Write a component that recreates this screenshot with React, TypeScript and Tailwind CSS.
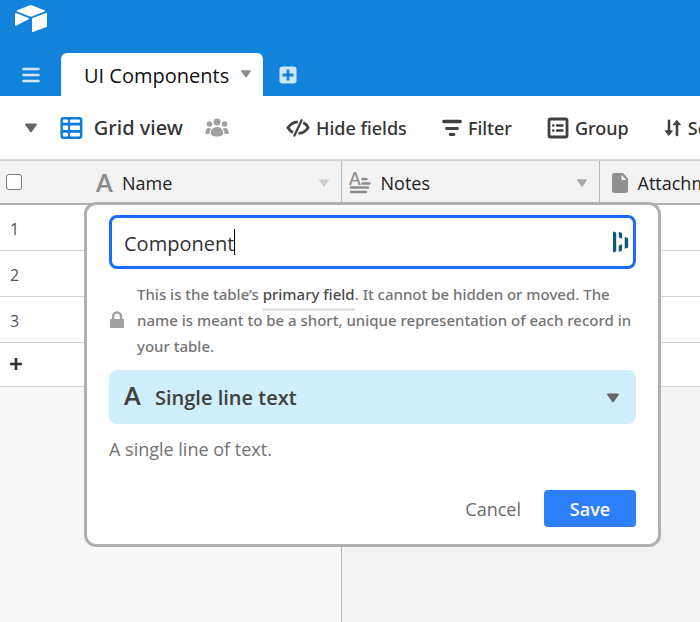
import { useState } from 'react'
import type { ReactNode } from 'react'

const columns = [
  { name: 'Name', icon: <LetterIcon className="text-[#8c8c8c]" />, arrow: 'text-[#cfcfcf]', pad: 'pl-3' },
  { name: 'Notes', icon: <LongTextIcon />, arrow: 'text-[#a8a8a8]', pad: 'pl-1.5' },
  { name: 'Attachments', icon: <FileIcon />, arrow: 'text-[#a8a8a8]', pad: 'pl-3' },
]

const rows = [1, 2, 3]

function Triangle({ className }: { className: string }) {
  return (
    <svg viewBox="0 0 12 9" className={className} fill="currentColor" aria-hidden="true">
      <path d="M1 0h10c.8 0 1.200.8.700 1.400L6.700 8.500c-.3.500-1.100.500-1.400 0L.3 1.400C-.2.800.2 0 1 0Z" />
    </svg>
  )
}

function LetterIcon({ className }: { className: string }) {
  return (
    <span
      aria-hidden="true"
      className={`inline-block w-4 text-center font-['Lato',sans-serif] text-2xl leading-6 font-bold ${className}`}
    >
      A
    </span>
  )
}

function LongTextIcon() {
  return (
    <svg width="23" height="22" viewBox="0 0 23 22" aria-hidden="true" className="shrink-0">
      <text x="1" y="13" fontSize="17" fontWeight="600" fontFamily="Lato, sans-serif" fill="#8c8c8c">
        A
      </text>
      <path
        d="M14.500 7h4M14.500 11.500h7M3 15.500h17M3 20h15"
        stroke="#8c8c8c"
        strokeWidth="2.400"
        strokeLinecap="round"
      />
    </svg>
  )
}

function FileIcon() {
  return (
    <svg width="16" height="20" viewBox="0 0 16 20" aria-hidden="true" className="shrink-0">
      <path
        fill="#8f8f8f"
        fillRule="evenodd"
        d="M2.500 0H11l5 5.500v12a2.500 2.500 0 0 1-2.500 2.500h-11A2.500 2.500 0 0 1 0 17.500v-15A2.500 2.500 0 0 1 2.500 0ZM9.500 1.800V7h5Z"
      />
    </svg>
  )
}

function Logo() {
  return (
    <svg width="34" height="28" viewBox="0 0 34 28" fill="#fff" role="img" aria-label="Airtable">
      <path d="M15.200.5 3.200 5.200c-.8.300-.8 1 0 1.300l12.200 4.800c1 .4 2 .4 3 0l12-4.800c.8-.3.800-1 0-1.300L18.300.5c-1-.4-2.100-.4-3.100 0Z" />
      <path d="M18 13.800v12.600c0 .6.500.9 1 .7l13.400-5.200c.4-.2.600-.4.600-.8V8.600c0-.6-.5-.9-1-.7L18.600 13c-.4.200-.6.400-.6.800Z" />
      <path d="M14.600 14.300 2.200 20.700c-.5.300-1.200 0-1.200-.6V8.700c0-.7.600-1 1.200-.7l12.200 4.900c.6.300.8 1.100.2 1.400Z" />
    </svg>
  )
}

function GridIcon() {
  return (
    <svg width="24" height="24" viewBox="0 0 24 24" aria-hidden="true">
      <rect x="0.500" y="0.500" width="23" height="23" rx="3" fill="#0b7bdc" />
      <g fill="#fff">
        <rect x="3" y="3" width="5.500" height="3.500" rx="1" />
        <rect x="10.500" y="3" width="10.500" height="3.500" rx="1" />
        <rect x="3" y="9.500" width="5.500" height="4.500" rx="1" />
        <rect x="10.500" y="9.500" width="10.500" height="4.500" rx="1" />
        <rect x="3" y="17" width="5.500" height="4" rx="1" />
        <rect x="10.500" y="17" width="10.500" height="4" rx="1" />
      </g>
    </svg>
  )
}

function PeopleIcon() {
  return (
    <svg width="24" height="20" viewBox="0 0 24 20" fill="#a0a0a0" aria-hidden="true">
      <circle cx="12" cy="4" r="3.500" />
      <circle cx="4.500" cy="6" r="2.800" />
      <circle cx="19.500" cy="6" r="2.800" />
      <path d="M12 9c3.600 0 6.200 2.600 6.200 6.200 0 2.200-2.900 3.300-6.200 3.300s-6.200-1.100-6.200-3.300C5.800 11.600 8.400 9 12 9Z" />
      <path d="M3.500 10c1 0 2 .3 2.700.9A8 8 0 0 0 4.200 16H1.500C.7 16 .3 15.500.4 14.700.6 11.900 1.700 10 3.500 10ZM20.500 10c-1 0-2 .3-2.700.9a8 8 0 0 1 2 5.100h2.700c.8 0 1.200-.5 1.100-1.300-.2-2.800-1.300-4.700-3.100-4.700Z" />
    </svg>
  )
}

function HideIcon() {
  return (
    <svg width="24" height="18" viewBox="0 0 24 18" fill="none" stroke="#404040" strokeWidth="2.800" aria-hidden="true">
      <path d="M11.800 2.800C7.500 3 4.200 5.300 1.900 8.800c1.400 2.200 3 3.700 5.100 4.700" />
      <path d="M17.200 3.600c2 1 3.700 2.700 4.900 5.100-2.300 3.500-5.300 5.500-9.600 5.700" />
      <path d="m15.600 1.200-7.200 15.500" strokeWidth="2.200" strokeLinecap="round" />
    </svg>
  )
}

function FilterIcon() {
  return (
    <svg width="20" height="18" viewBox="0 0 20 18" stroke="#404040" strokeLinecap="round" aria-hidden="true">
      <path d="M1.800 2.500h16.400" strokeWidth="3.400" />
      <path d="M4.500 9.500h11M8.200 15.500h3.800" strokeWidth="2.800" />
    </svg>
  )
}

function GroupIcon() {
  return (
    <svg width="22" height="22" viewBox="0 0 22 22" fill="none" stroke="#404040" aria-hidden="true">
      <rect x="2" y="2" width="18" height="18" rx="1.500" strokeWidth="2.800" />
      <path d="M10 8.500h5.500M10 13.500h5.500M6.200 8.500h.2M6.200 13.500h.2" strokeWidth="2.400" strokeLinecap="round" />
    </svg>
  )
}

function SortIcon() {
  return (
    <svg width="18" height="18" viewBox="0 0 18 18" fill="none" stroke="#404040" strokeWidth="2.600" strokeLinecap="round" aria-hidden="true">
      <path d="M5 1.800V13M13 16V5" />
      <path d="M1.600 11.800h6.800L5 16.200ZM9.600 5.700h6.800L13 1.500Z" fill="#404040" strokeWidth="1" strokeLinejoin="round" />
    </svg>
  )
}

function LockIcon() {
  return (
    <svg width="16" height="18" viewBox="0 0 16 18" aria-hidden="true" className="shrink-0">
      <path d="M4 8.500V5.500a4 4 0 0 1 8 0v3" fill="none" stroke="#a0a0a0" strokeWidth="2.400" />
      <rect x="1" y="8" width="14" height="9" rx="1" fill="#a0a0a0" />
    </svg>
  )
}

function PasswordIcon() {
  return (
    <svg
      width="16"
      height="22"
      viewBox="0 0 16 22"
      fill="#0e5c70"
      aria-hidden="true"
      className="absolute top-4 right-[7px]"
    >
      <path d="M0 .5 3.200 1.500v19L0 21.500ZM5.800.7 9 2v5.800L5.800 6.500ZM5.800 14.500 9 13.300v6.200l-3.200 1.400ZM11.700 6l3.500 1.200v9.200l-3.500 1.300Z" />
    </svg>
  )
}

function ToolButton({ icon, children }: { icon: ReactNode; children: ReactNode }) {
  return (
    <button type="button" className="flex shrink-0 items-center gap-1.5 text-lg font-medium text-[#333333]">
      {icon}
      {children}
    </button>
  )
}

function TopBar() {
  return (
    <header className="bg-[#1283da] pt-[5px]">
      <a href="#home" className="ml-3.5 block w-fit">
        <Logo />
      </a>
      <div className="mt-5 flex items-stretch">
        <button type="button" aria-label="Menu" className="flex w-[61px] items-center justify-center">
          <svg width="18" height="16" viewBox="0 0 18 16" stroke="#cfe6fa" strokeWidth="2.600" strokeLinecap="round">
            <path d="M1.500 2h15M1.500 8h15M1.500 14h15" />
          </svg>
        </button>
        <div className="flex h-[43px] w-[202px] items-center justify-between rounded-t-md bg-white pt-0.5 pr-3 pl-[23px]">
          <h1 className="text-xl font-medium whitespace-nowrap text-[#111111]">UI Components</h1>
          <button type="button" aria-label="Table options" className="text-[#8c8c8c]">
            <Triangle className="mb-1 h-2 w-2.5" />
          </button>
        </div>
        <button type="button" aria-label="Add table" className="ml-4">
          <svg width="18" height="18" viewBox="0 0 18 18">
            <rect x="0.500" y="0.500" width="17" height="17" rx="3" fill="#d0e6fa" />
            <path d="M9 3.500v11M3.500 9h11" stroke="#1283da" strokeWidth="2.800" />
          </svg>
        </button>
      </div>
    </header>
  )
}

function Toolbar() {
  return (
    <div className="flex h-[65px] items-center overflow-hidden border-b-2 border-[#d6d6d6] bg-white font-['Noto_Sans',sans-serif] whitespace-nowrap text-[#333333]">
      <button type="button" aria-label="Toggle views" className="ml-[25px] shrink-0 text-[#666666]">
        <Triangle className="h-2.5 w-3" />
      </button>
      <button type="button" className="ml-[23px] flex w-[123px] shrink-0 items-center gap-[11px] text-xl font-medium">
        <GridIcon />
        Grid view
      </button>
      <button type="button" aria-label="Collaborators" className="ml-[22px] shrink-0">
        <PeopleIcon />
      </button>
      <div className="ml-[57px] flex gap-[35px]">
        <ToolButton icon={<HideIcon />}>Hide fields</ToolButton>
        <ToolButton icon={<FilterIcon />}>Filter</ToolButton>
        <ToolButton icon={<GroupIcon />}>Group</ToolButton>
        <ToolButton icon={<SortIcon />}>Sort</ToolButton>
      </div>
    </div>
  )
}

function DataGrid() {
  return (
    <table className="w-full table-fixed border-collapse bg-white">
      <colgroup>
        <col className="w-[84px]" />
        <col className="w-[257px]" />
        <col className="w-[258px]" />
        <col />
      </colgroup>
      <thead>
        <tr className="h-[43px] border-b-2 border-[#b0b0b0] bg-[#f3f3f3]">
          <th className="pl-1.5 text-left">
            <input
              type="checkbox"
              aria-label="Select all rows"
              className="block size-4 appearance-none rounded-[3px] border border-[#6f7d88] bg-white"
            />
          </th>
          {columns.map((column) => (
            <th
              key={column.name}
              className={`overflow-hidden border-r border-[#b8b8b8] pt-0.5 pr-3 font-normal last:border-r-0 ${column.pad}`}
            >
              <div className="flex items-center gap-2.5 text-lg leading-6 text-[#222222]">
                {column.icon}
                <span>{column.name}</span>
                <button type="button" aria-label={`${column.name} options`} className={`ml-auto ${column.arrow}`}>
                  <Triangle className="h-2 w-2.5" />
                </button>
              </div>
            </th>
          ))}
        </tr>
      </thead>
      <tbody className="text-base text-[#555555]">
        {rows.map((row) => (
          <tr key={row} className="h-[46px] border-b border-[#cfd5d9]">
            <td className="pt-1 pl-2.5">{row}</td>
            <td className="border-r border-[#cfd5d9]" />
            <td className="border-r border-[#cfd5d9]" />
            <td />
          </tr>
        ))}
        <tr className="h-[44px] border-b border-[#cfd5d9]">
          <td colSpan={4} className="pl-2.5">
            <button type="button" aria-label="Add record" className="block">
              <svg width="12" height="12" viewBox="0 0 12 12" stroke="#333333" strokeWidth="2.600">
                <path d="M6 0v12M0 6h12" />
              </svg>
            </button>
          </td>
        </tr>
      </tbody>
    </table>
  )
}

function FieldDialog() {
  const [name, setName] = useState('Component')

  return (
    <form
      role="dialog"
      aria-label="Edit field"
      onSubmit={(event) => event.preventDefault()}
      className="absolute top-[41px] left-[84px] w-[577px] rounded-xl border-3 border-[#b0b0b0] bg-white px-[22px] pt-2.5 pb-[17px]"
    >
      <div className="relative">
        <input
          aria-label="Field name"
          value={name}
          onChange={(event) => setName(event.target.value)}
          className="h-[54px] w-full rounded-lg border-3 border-[#1a6dfb] bg-white pt-0.5 pr-9 pl-3 text-xl text-[#333333] caret-transparent outline-none"
        />
        <span aria-hidden="true" className="absolute top-3.5 left-[125px] h-[26px] w-px bg-black" />
        <PasswordIcon />
      </div>

      <div className="mt-3 flex items-center gap-3">
        <LockIcon />
        <p className="font-['Noto_Sans',sans-serif] text-[15px] leading-[26px] font-medium text-[#737373]">
          This is the table’s{' '}
          <span className="text-[#4a4a4a] underline decoration-[#e3e3e3] decoration-3 underline-offset-8 [text-decoration-skip-ink:none]">
            primary field
          </span>
          . It cannot be hidden or moved. The name is meant to be a short, unique representation of each record in your
          table.
        </p>
      </div>

      <div className="relative mt-[11px]">
        <select
          aria-label="Field type"
          className="h-[54px] w-full appearance-none rounded-lg bg-[#cfeffc] pt-0.5 pr-10 pl-[46px] text-xl font-semibold text-[#404040]"
        >
          <option>Single line text</option>
        </select>
        <span className="pointer-events-none absolute top-3.5 left-[15px]">
          <LetterIcon className="text-[#404040]" />
        </span>
        <Triangle className="pointer-events-none absolute top-[23px] right-[17px] h-2.5 w-3 text-[#666666]" />
      </div>

      <p className="mt-[11px] text-lg text-[#737373]">A single line of text.</p>

      <div className="mt-[27px] flex items-center justify-end gap-[23px] text-lg">
        <button type="button" className="text-[#6b6b6b]">
          Cancel
        </button>
        <button type="submit" className="h-[37px] w-[92px] rounded bg-[#2d7ff9] font-semibold text-white">
          Save
        </button>
      </div>
    </form>
  )
}

export default function App() {
  return (
    <div className="flex min-h-screen flex-col bg-[#f3f3f3] font-['Open_Sans',sans-serif]">
      <TopBar />
      <Toolbar />
      <main className="relative flex flex-1 flex-col">
        <DataGrid />
        <div className="flex flex-1">
          <div className="w-[342px] border-r border-[#b8b8b8] bg-[#f8f8f8]" />
        </div>
        <FieldDialog />
      </main>
    </div>
  )
}
